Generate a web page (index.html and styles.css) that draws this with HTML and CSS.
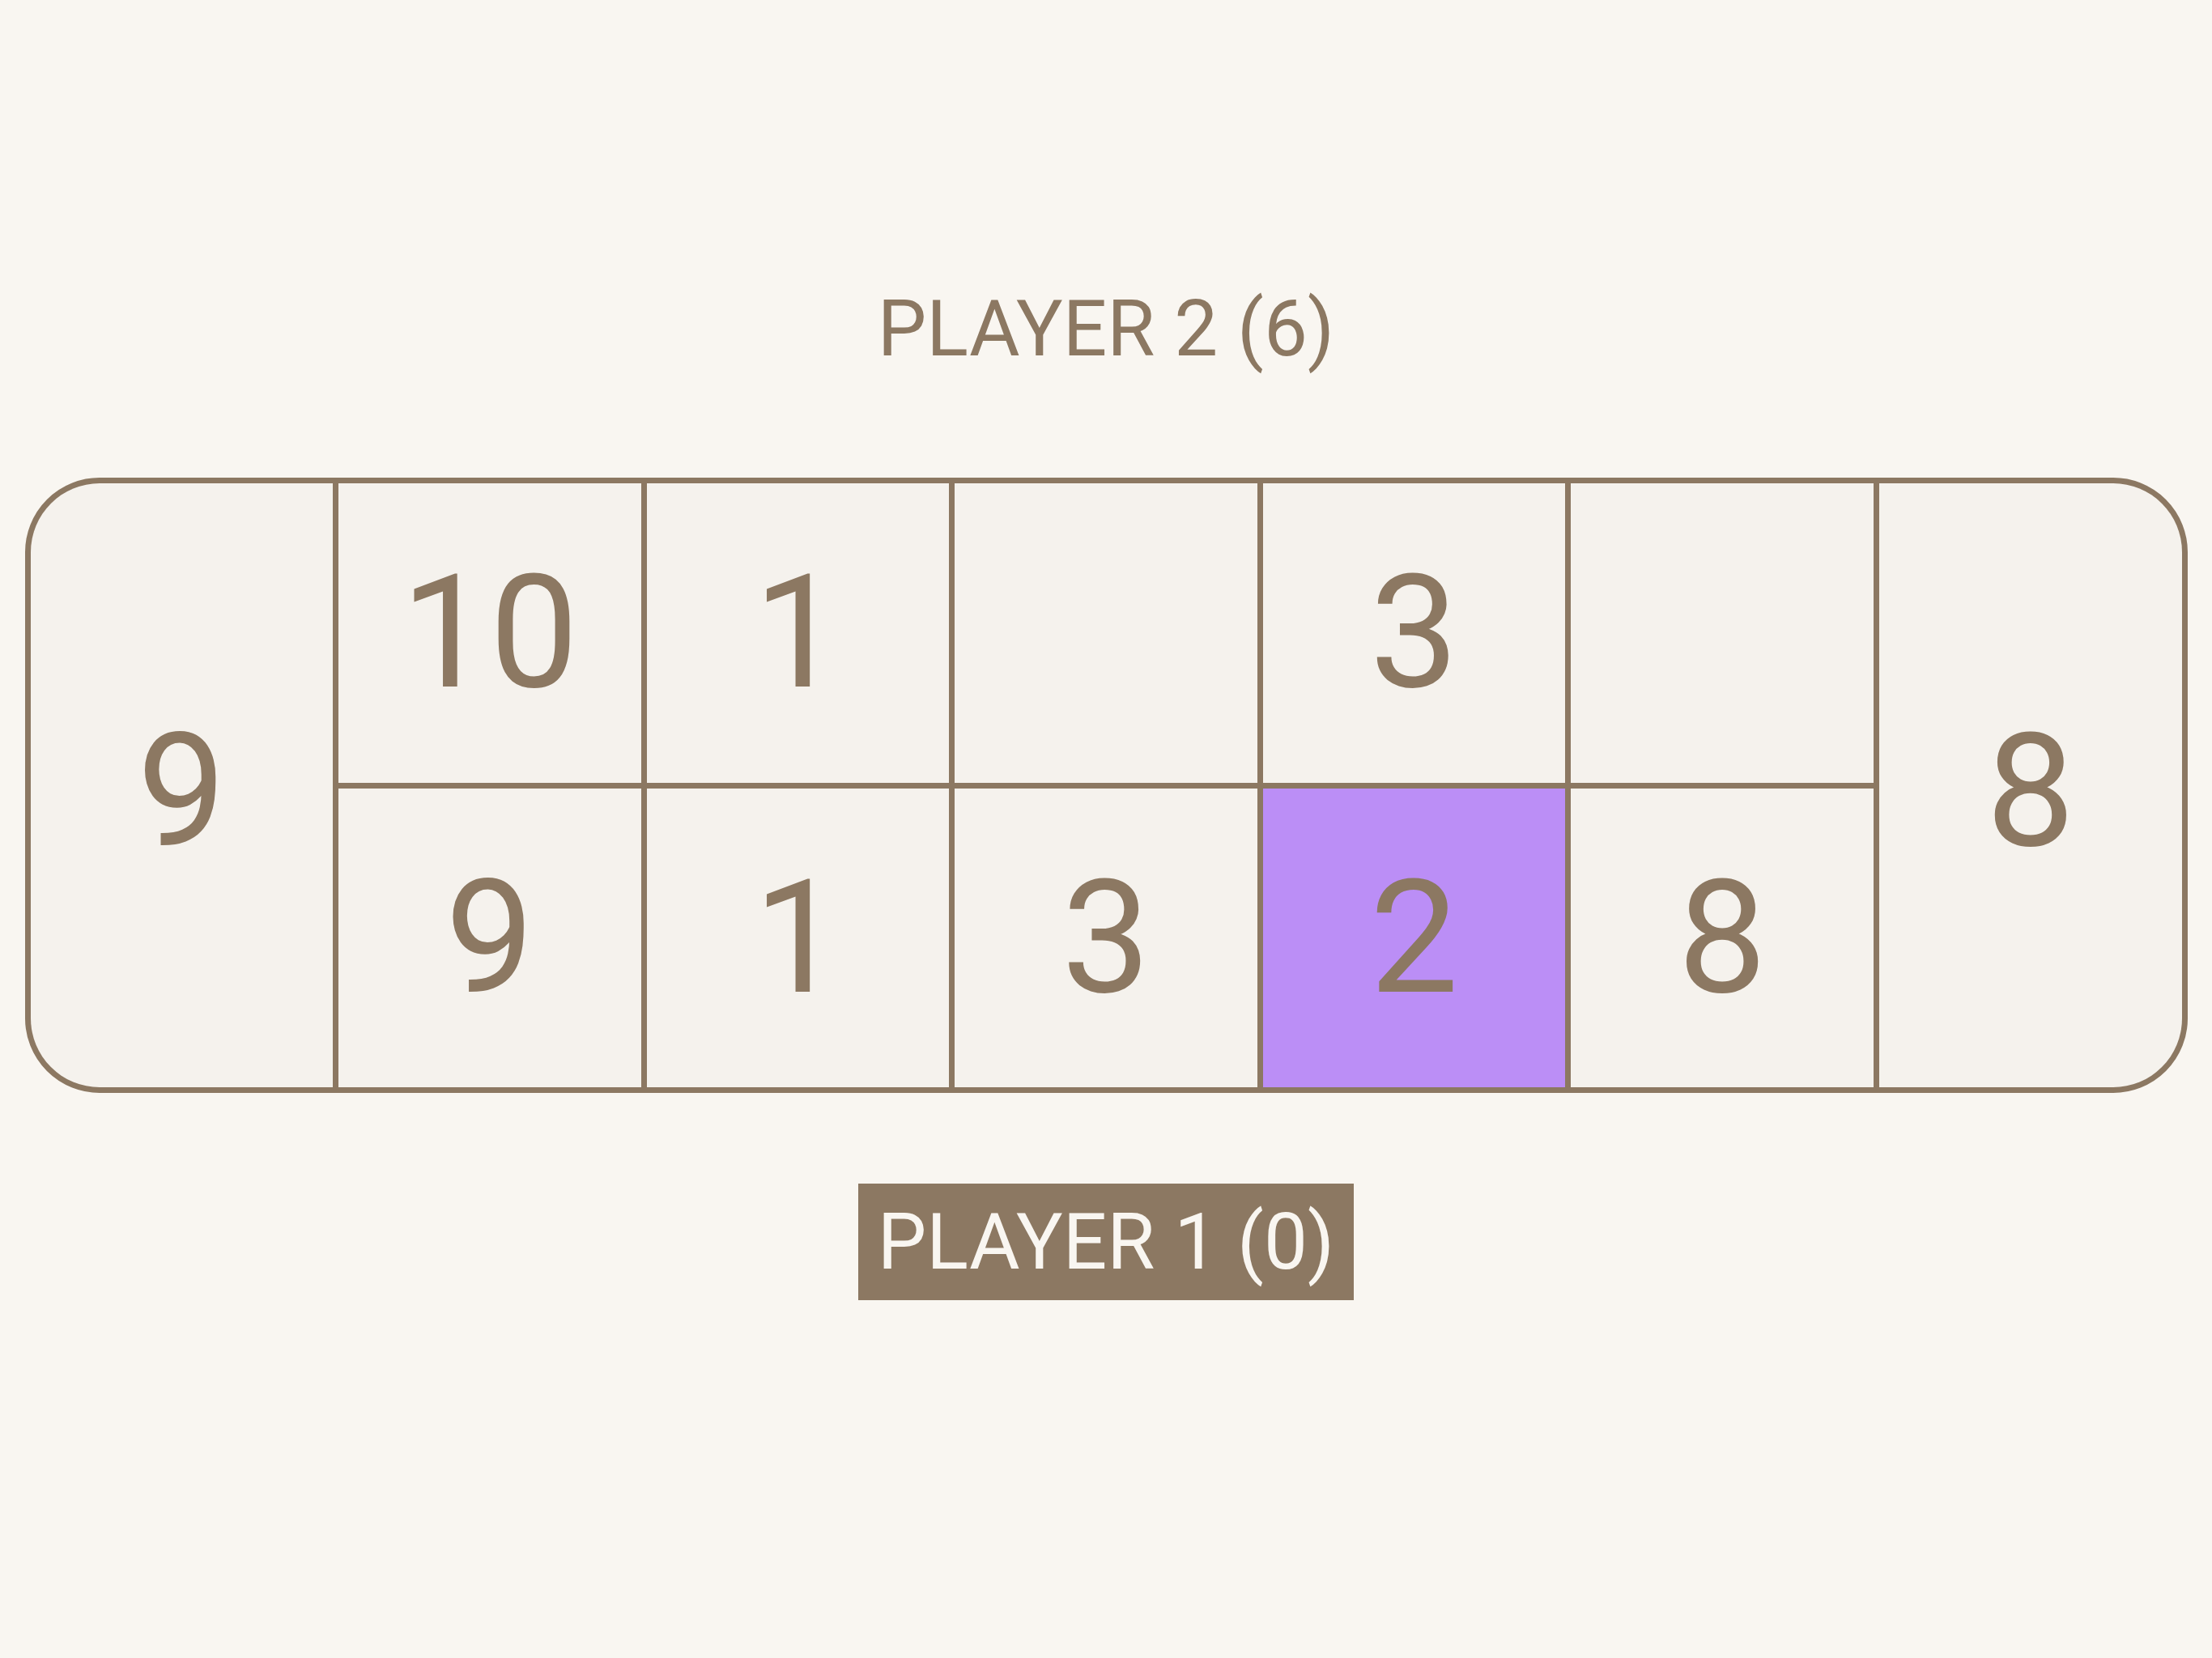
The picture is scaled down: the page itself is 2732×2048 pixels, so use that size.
FILE: index.html
```html
<!DOCTYPE html>
<html lang="en">

<head>
  <meta charset="UTF-8">
  <meta name="viewport" content="width=device-width, initial-scale=1.0">
  <title>Mancala</title>
  <link rel="stylesheet" href="styles.css">
</head>

<body>

  <div class="game">
    <!-- Opponent -->
    <div class="player-label">PLAYER 2 (6)</div>

    <!-- Board: store, top pits, store, bottom pits -->
    <div class="board">
      <div class="store">9</div>
      <div class="pit">10</div>
      <div class="pit">1</div>
      <div class="pit"></div>
      <div class="pit">3</div>
      <div class="pit"></div>
      <div class="store">8</div>
      <div class="pit">9</div>
      <div class="pit">1</div>
      <div class="pit">3</div>
      <div class="pit selected">2</div>
      <div class="pit">8</div>
    </div>

    <!-- Current player -->
    <div class="player-label active">PLAYER 1 (0)</div>
  </div>

</body>

</html>
```

FILE: styles.css
```css
body {
  background-color: #f9f6f1;
  color: #8c7862;
  font-family: Roboto, "Liberation Sans", sans-serif;
  margin: 0;
}

.game {
  display: flex;
  flex-direction: column;
  align-items: center;
  padding-top: 349px;
}

.player-label {
  font-size: 96px;
  line-height: 114px;
  padding: 0 24px;
}

.player-label.active {
  background-color: #8c7862;
  color: #f9f6f1;
  padding: 15px 24px;
}

.board {
  box-sizing: border-box;
  width: 2671px;
  height: 760px;
  margin: 127px 0 112px;
  display: grid;
  grid-template-columns: repeat(7, 1fr);
  grid-template-rows: repeat(2, 1fr);
  gap: 7px;
  background-color: #8c7862;
  border: 7px solid #8c7862;
  border-radius: 92px;
  overflow: hidden;
}

.pit,
.store {
  background-color: #f5f2ed;
  display: flex;
  justify-content: center;
  align-items: center;
  font-size: 195px;
  line-height: 1;
}

.store {
  grid-row: span 2;
  padding-top: 14px;
}

.pit.selected {
  background-color: #bb8ef6;
}
```
